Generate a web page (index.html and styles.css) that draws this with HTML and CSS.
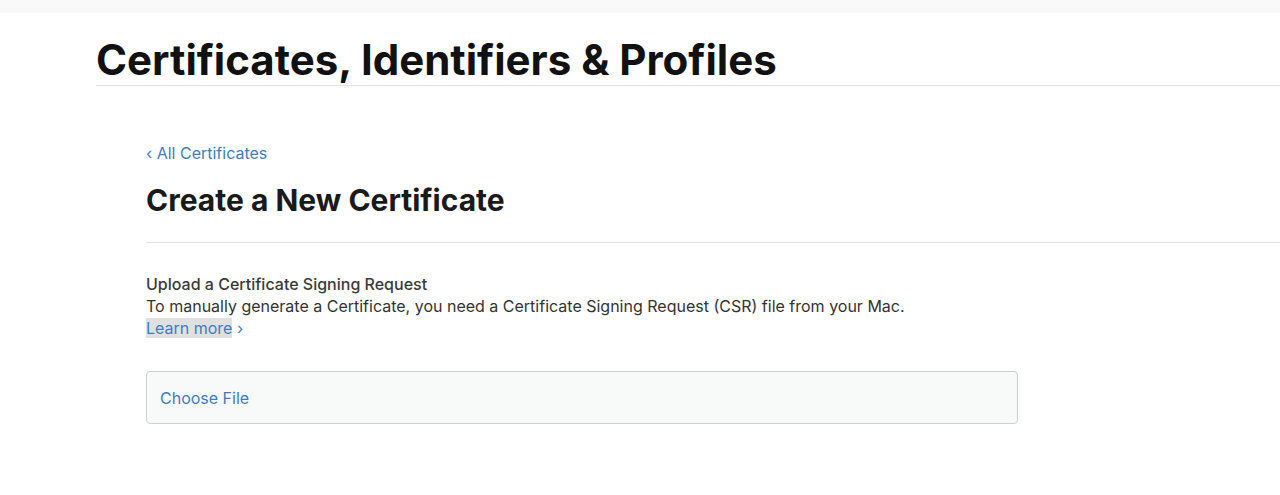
FILE: index.html
```html
<!DOCTYPE html>
<html>
<head>
<meta charset="utf-8">
<link rel="stylesheet" href="styles.css">
</head>
<body>
<div class="topbar"></div>
<header class="page-head">
  <h1 class="page-title">Certificates, Identifiers &amp; Profiles</h1>
</header>
<main class="content">
  <a class="back" href="#">‹ All Certificates</a>
  <h2 class="section-title">Create a New Certificate</h2>
  <div class="form">
    <div class="label">Upload a Certificate Signing Request</div>
    <div class="desc">To manually generate a Certificate, you need a Certificate Signing Request (CSR) file from your Mac.</div>
    <div class="learn"><a class="learn-link" href="#">Learn more</a> ›</div>
    <div class="file-box"><span class="file-btn">Choose File</span></div>
  </div>
</main>
</body>
</html>
```
FILE: styles.css
```css
* { box-sizing: border-box; }
html, body { margin: 0; padding: 0; background: #fff; }
body { font-family: Inter, "Liberation Sans", Arial, sans-serif; color: #111; overflow: hidden; }
a { text-decoration: none; }
.topbar { height: 13px; background: #f9f9f9; }
.page-head { margin-left: 96px; border-bottom: 1px solid #e3e3e3; height: 73px; padding-top: 23px; }
.page-title { margin: 0; font-size: 42px; font-weight: 700; line-height: 48px; letter-spacing: 0; color: #111; }
.content { margin-left: 146px; padding-top: 56px; }
.back { display: block; color: #3f7cc2; font-size: 16px; line-height: 22px; }
.section-title { margin: 0; padding-top: 18px; padding-bottom: 24px; font-size: 30px; font-weight: 700; line-height: 36px; color: #1a1a1a; border-bottom: 1px solid #e3e3e3; }
.form { padding-top: 30px; }
.label { font-size: 16px; font-weight: 500; line-height: 22px; color: #3a3a3a; }
.desc { font-size: 16px; line-height: 22px; color: #333; }
.learn { font-size: 16px; line-height: 22px; color: #3f7cc2; }
.learn-link { color: #3f7cc2; background: #e0e0e0; display: inline-block; line-height: 20px; }
.file-box { margin-top: 32px; width: 872px; height: 53px; border: 1px solid #cfcfcf; border-radius: 4px; background: #f8f9f9; display: flex; align-items: center; padding-left: 13px; }
.file-btn { color: #3f7cc2; font-size: 16px; }
```
